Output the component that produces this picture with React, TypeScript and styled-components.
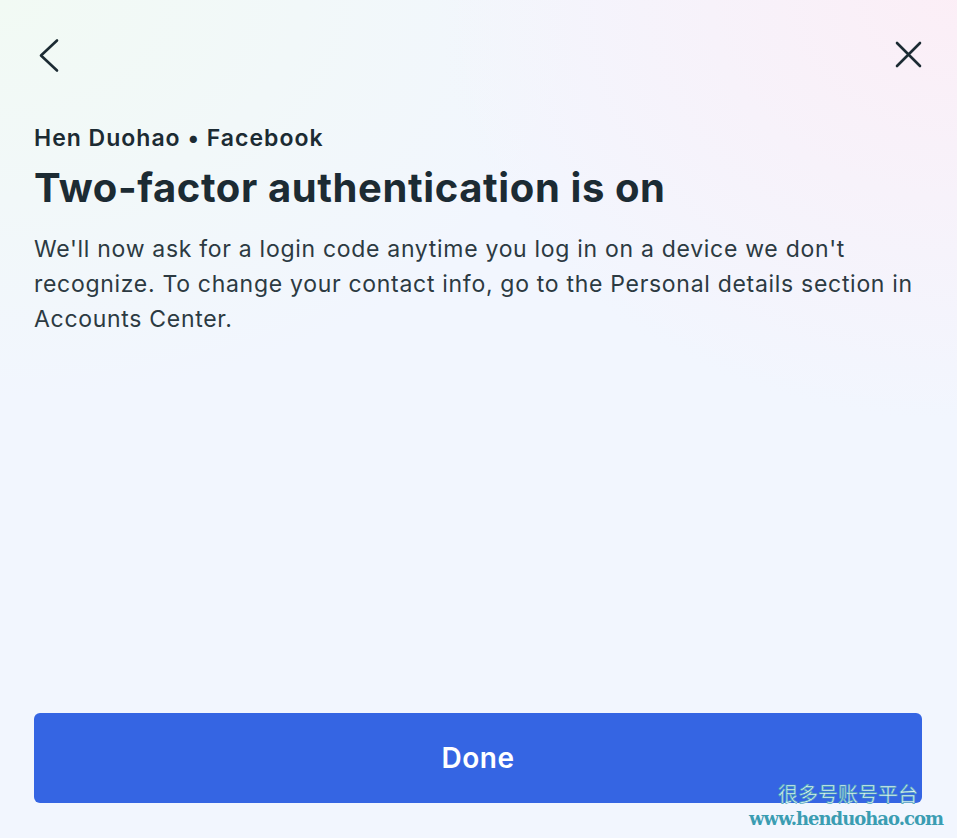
import React from "react";
import styled, { createGlobalStyle } from "styled-components";

const Global = createGlobalStyle`
  html, body { margin: 0; padding: 0; height: 100%; }
  body { font-family: Inter, "Noto Sans", "Liberation Sans", sans-serif; }
  #root { height: 100%; }
`;

const Page = styled.div`
  position: relative;
  box-sizing: border-box;
  width: 957px;
  height: 838px;
  display: flex;
  flex-direction: column;
  padding: 0 35px 35px 34px;
  color: #1c2b33;
  background:
    radial-gradient(ellipse 520px 420px at 100% 0%, rgba(252, 238, 246, 0.95), rgba(252, 238, 246, 0) 100%),
    radial-gradient(ellipse 600px 400px at 0% 0%, rgba(242, 250, 244, 1), rgba(242, 250, 244, 0) 100%),
    #f2f6fe;
  overflow: hidden;
`;

const TopBar = styled.div`
  height: 110px;
  display: flex;
  align-items: flex-start;
  justify-content: space-between;
  padding-top: 37px;
  box-sizing: border-box;
`;

const IconButton = styled.button<{ $shift?: number }>`
  border: 0;
  background: transparent;
  padding: 0;
  width: 36px;
  height: 36px;
  display: flex;
  align-items: center;
  justify-content: center;
  color: #1c2b33;
  margin-left: ${(p) => p.$shift ?? 0}px;
  cursor: pointer;
`;

const Subtitle = styled.div`
  font-size: 23px;
  font-weight: 600;
  line-height: 30px;
  margin-top: 13px;
  letter-spacing: 1px;
`;

const Title = styled.h1`
  margin: 10px 0 0;
  font-size: 40px;
  font-weight: 700;
  line-height: 50px;
  letter-spacing: 0.6px;
`;

const Body = styled.p`
  margin: 19px 0 0;
  font-size: 23px;
  line-height: 35px;
  font-weight: 400;
  color: #2c3a42;
  letter-spacing: 0.7px;
`;

const Spacer = styled.div`
  flex: 1;
`;

const DoneButton = styled.button`
  height: 90px;
  width: 100%;
  border: 0;
  border-radius: 6px;
  background: #3565e3;
  color: #ffffff;
  font-family: inherit;
  font-size: 28px;
  font-weight: 600;
  letter-spacing: 0.5px;
  cursor: pointer;
`;

const WatermarkCn = styled.div`
  position: absolute;
  right: 39px;
  bottom: 33px;
  font-family: "Noto Sans CJK SC", sans-serif;
  font-size: 20px;
  line-height: 22px;
  color: #dff3f7;
  -webkit-text-stroke: 0.6px #4aa3b4;
`;

const WatermarkUrl = styled.div`
  position: absolute;
  right: 14px;
  bottom: 8px;
  font-family: "DejaVu Serif", "Liberation Serif", serif;
  font-weight: 700;
  font-size: 18px;
  line-height: 22px;
  color: #3b9db2;
  letter-spacing: -1px;
`;

export default function App() {
  return (
    <Page>
      <Global />
      <TopBar>
        <IconButton aria-label="Back" $shift={-2}>
          <svg width="36" height="36" viewBox="0 0 36 36" fill="none">
            <path d="M25 3.5 L9 18.5 L25 33.5" stroke="#1c2b33" strokeWidth="2.6" strokeLinecap="round" strokeLinejoin="round" />
          </svg>
        </IconButton>
        <IconButton aria-label="Close">
          <svg width="36" height="36" viewBox="0 0 36 36" fill="none">
            <path d="M11 6 L34 29 M34 6 L11 29" stroke="#1c2b33" strokeWidth="2.6" strokeLinecap="round" />
          </svg>
        </IconButton>
      </TopBar>
      <Subtitle>Hen Duohao • Facebook</Subtitle>
      <Title>Two-factor authentication is on</Title>
      <Body>
        We'll now ask for a login code anytime you log in on a device we don't recognize. To change your contact info, go to the Personal details section in Accounts Center.
      </Body>
      <Spacer />
      <DoneButton>Done</DoneButton>
      <WatermarkCn>很多号账号平台</WatermarkCn>
      <WatermarkUrl>www.henduohao.com</WatermarkUrl>
    </Page>
  );
}
